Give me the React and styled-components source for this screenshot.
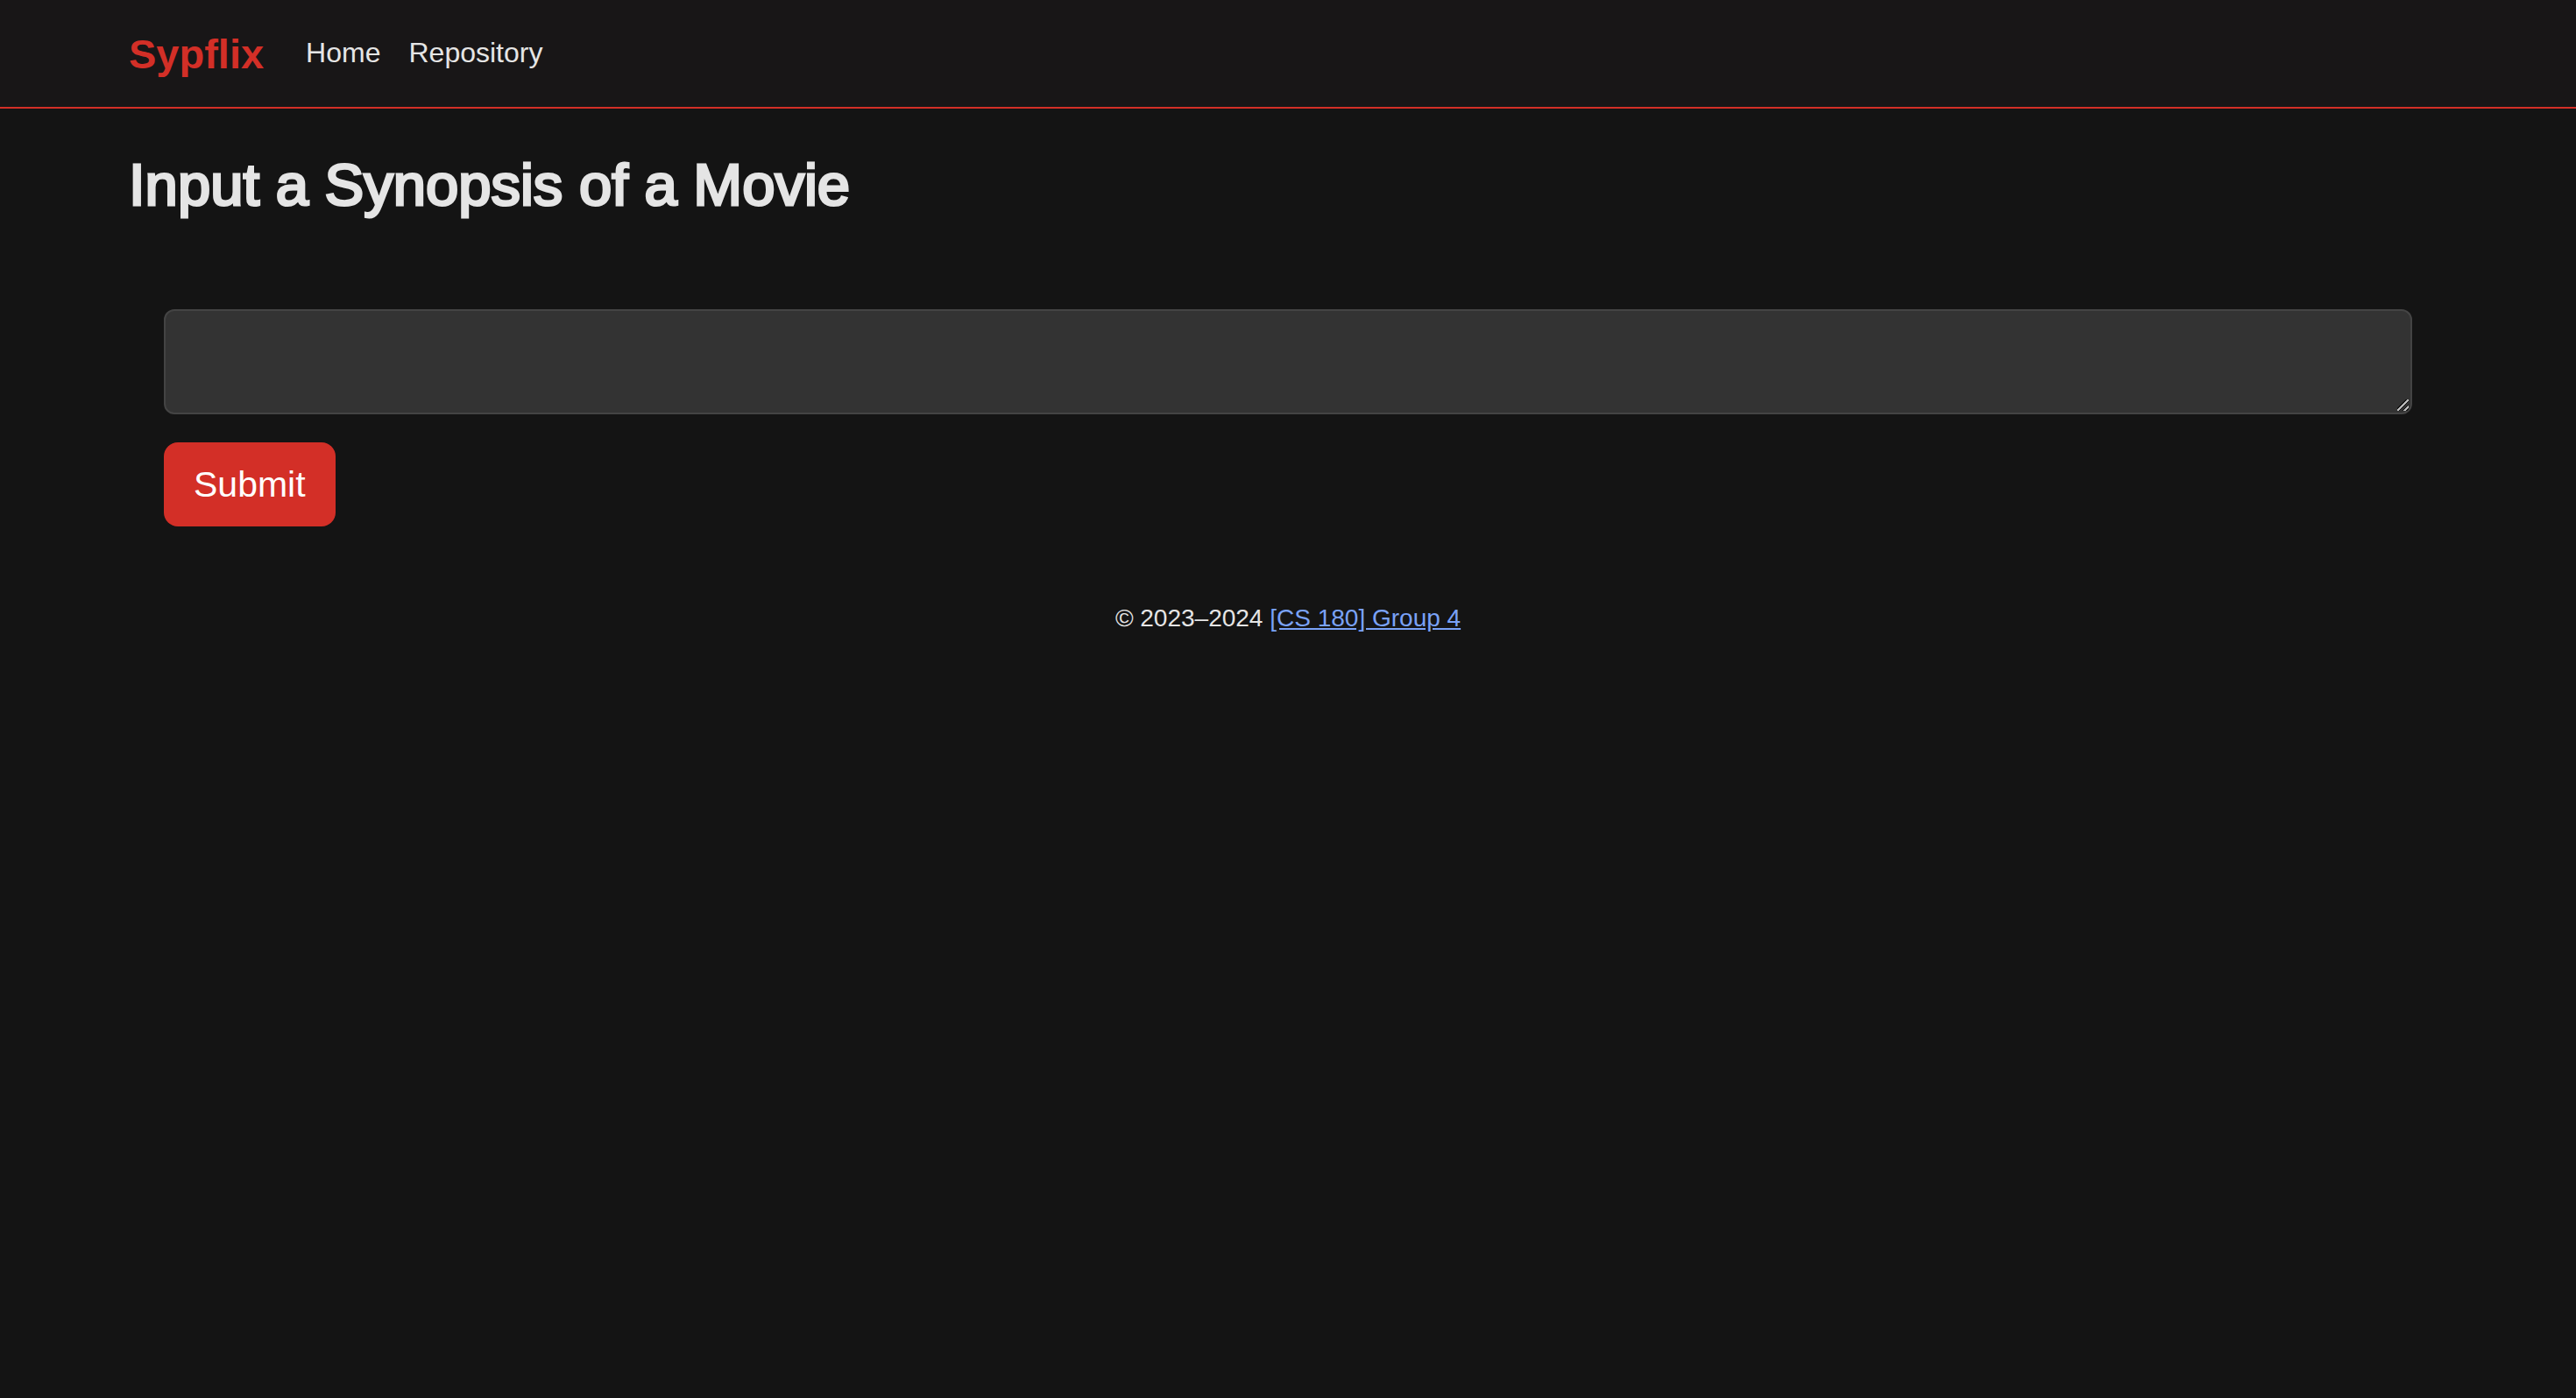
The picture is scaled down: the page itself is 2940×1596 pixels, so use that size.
import React from "react";
import styled, { createGlobalStyle } from "styled-components";

const GlobalStyle = createGlobalStyle`
  *, *::before, *::after { box-sizing: border-box; }
  body {
    margin: 0;
    background: #141414;
    color: #e5e5e5;
    font-family: "Liberation Sans", Arial, sans-serif;
    font-size: 32px;
    line-height: 48px;
  }
`;

const Header = styled.header`
  display: flex;
  align-items: flex-start;
  gap: 48px;
  padding: 24px 5% 22px;
  background: #181617;
  border-bottom: 2px solid #d32f27;
`;

const Brand = styled.a`
  color: #d32f27;
  font-size: 47px;
  line-height: 76px;
  font-weight: 700;
  text-decoration: none;
`;

const Nav = styled.nav`
  display: flex;
  gap: 32px;
  line-height: 72px;
`;

const NavLink = styled.a`
  color: #e5e5e5;
  text-decoration: none;
`;

const Main = styled.main`
  padding: 48px 5% 0;
`;

const Title = styled.h1`
  margin: 0;
  font-size: 67px;
  line-height: 78px;
  font-weight: 400;
  -webkit-text-stroke: 3px #e5e5e5;
`;

const Form = styled.form`
  display: flex;
  flex-direction: column;
  align-items: flex-start;
  gap: 32px;
  margin-top: 63px;
  padding: 40px;
`;

const Synopsis = styled.textarea`
  display: block;
  width: 100%;
  height: 120px;
  padding: 12px 24px;
  color: #e5e5e5;
  background: #333333;
  border: 2px solid #444444;
  border-radius: 12px;
  font: inherit;
  resize: vertical;

  &::-webkit-resizer {
    background: linear-gradient(
        135deg,
        transparent 0 7px,
        #141414 7px 8px,
        #bbbbbb 8px 10px,
        #141414 10px 11px,
        transparent 11px 13px,
        #141414 13px 14px,
        #bbbbbb 14px 16px,
        #141414 16px 17px,
        transparent 17px
      )
      0 0 / 13px 13px no-repeat;
  }
`;

const SubmitButton = styled.button`
  padding: 18px 34px;
  color: #ffffff;
  background: #d32f27;
  border: 0;
  border-radius: 16px;
  font-family: inherit;
  font-size: 41px;
  line-height: 60px;
  cursor: pointer;
`;

const Footer = styled.footer`
  padding: 40px 5%;
  font-size: 28px;
  line-height: 50px;
  text-align: center;
`;

const FooterLink = styled.a`
  color: #7aa2f7;
`;

export default function App() {
  return (
    <>
      <GlobalStyle />
      <Header>
        <Brand href="#home">Sypflix</Brand>
        <Nav>
          <NavLink href="#home">Home</NavLink>
          <NavLink href="#repository">Repository</NavLink>
        </Nav>
      </Header>
      <Main>
        <Title id="synopsis-title">Input a Synopsis of a Movie</Title>
        <Form onSubmit={(event) => event.preventDefault()}>
          <Synopsis name="synopsis" aria-labelledby="synopsis-title" />
          <SubmitButton type="submit">Submit</SubmitButton>
        </Form>
      </Main>
      <Footer>
        © 2023–2024 <FooterLink href="#group">[CS 180] Group 4</FooterLink>
      </Footer>
    </>
  );
}
